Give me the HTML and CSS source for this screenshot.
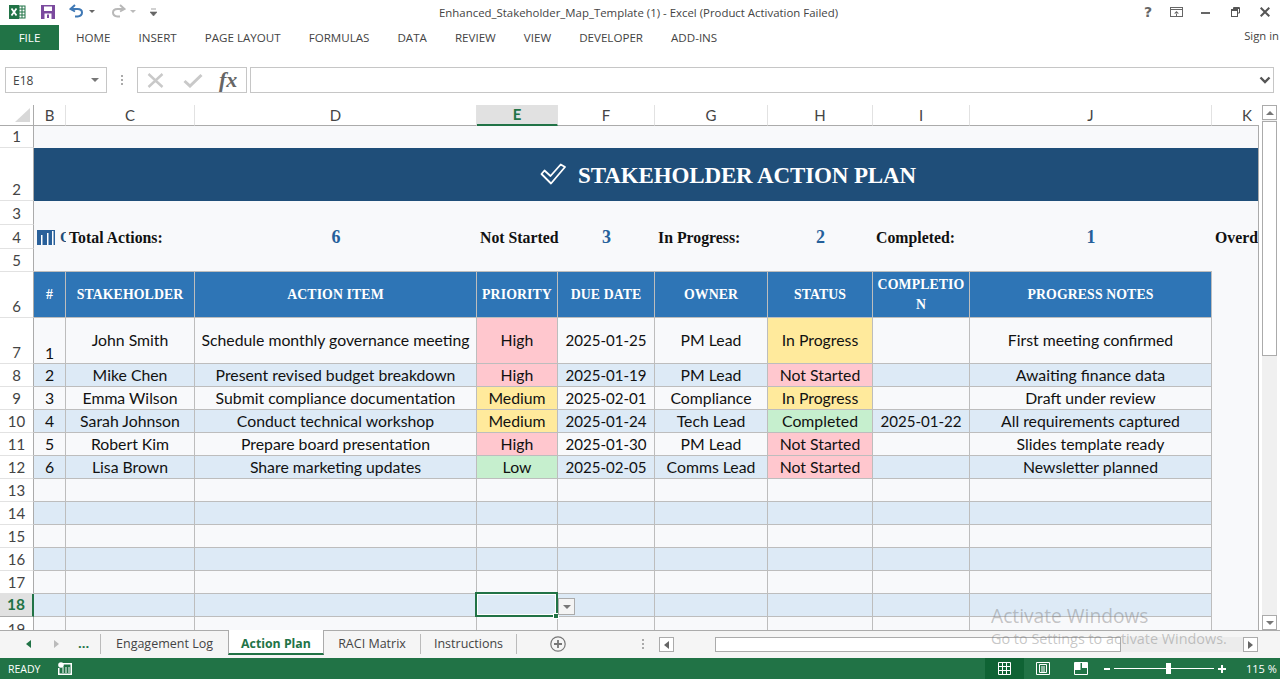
FILE: index.html
```html
<!DOCTYPE html>
<html lang="en">
<head>
<meta charset="utf-8">
<title>Excel</title>
<link rel="stylesheet" href="styles.css">
</head>
<body>
<div class="app">
  <header class="titlebar">
    <div class="qat">
      <svg class="ico-xl" viewBox="0 0 17 16" width="17" height="16"><rect x="6" y="2" width="10" height="12" fill="#fff" stroke="#217346"/><path d="M10 2v12M13 2v12M6 5h10M6 8h10M6 11h10" stroke="#217346" stroke-width="1"/><rect x="0" y="1" width="10" height="14" fill="#217346"/><path d="M2.500 4.500l5 7M7.500 4.500l-5 7" stroke="#fff" stroke-width="1.800"/></svg>
      <svg class="ico-save" viewBox="0 0 14 14" width="14" height="14"><path d="M0 0h14v14H0z" fill="#7b4a9e"/><rect x="3" y="1.500" width="8" height="4.500" fill="#fff"/><rect x="3.500" y="8.500" width="7" height="5.500" fill="#fff"/><rect x="6" y="9.500" width="2" height="3.500" fill="#7b4a9e"/></svg>
      <svg class="ico-undo" viewBox="0 0 16 14" width="16" height="14"><path d="M6 1L1.500 5 6 7.500" fill="none" stroke="#3f78b5" stroke-width="2"/><path d="M2 5h6.500c6 0 6 7 0 7.500H6" fill="none" stroke="#3f78b5" stroke-width="2"/></svg>
      <span class="caret"></span>
      <svg class="ico-redo" viewBox="0 0 16 14" width="16" height="14"><path d="M10 1l4.500 4L10 7.500" fill="none" stroke="#b8b8b8" stroke-width="2"/><path d="M14 5H7.500c-6 0-6 7 0 7.500H10" fill="none" stroke="#b8b8b8" stroke-width="2"/></svg>
      <span class="caret caret-off"></span>
      <svg class="ico-more" viewBox="0 0 7 8" width="7" height="8"><path d="M1 1h5M0 4h7l-3.500 4z" fill="#666" stroke="#666" stroke-width=".6"/></svg>
    </div>
    <div class="doc-title">Enhanced_Stakeholder_Map_Template (1) - Excel (Product Activation Failed)</div>
    <div class="winctl">
      <span class="help">?</span>
      <svg class="w-pin" viewBox="0 0 13 10" width="13" height="10"><rect x=".5" y=".5" width="12" height="9" fill="none" stroke="#666"/><path d="M1 2.500h11" stroke="#666"/><path d="M6.500 4l-2.500 2.500h5zM6 6h1v3H6z" fill="#666"/></svg>
      <svg class="w-min" viewBox="0 0 9 10" width="9" height="10"><path d="M0 6h9" stroke="#666" stroke-width="2"/></svg>
      <svg class="w-max" viewBox="0 0 9 10" width="9" height="10"><path d="M2.500 2.500V.5h6v5.500h-2" fill="none" stroke="#555"/><rect x=".5" y="2.500" width="6" height="7" fill="#fff" stroke="#555"/><path d="M.5 3.500h6M2.500 1.500h6" stroke="#555"/></svg>
      <svg class="w-x" viewBox="0 0 10 10" width="10" height="10"><path d="M.7 .7l8.600 8.600M9.300 .7L.7 9.300" stroke="#555" stroke-width="2"/></svg>
    </div>
  </header>

  <nav class="ribbon">
    <span class="file">FILE</span>
    <span class="rtab">HOME</span>
    <span class="rtab">INSERT</span>
    <span class="rtab">PAGE LAYOUT</span>
    <span class="rtab">FORMULAS</span>
    <span class="rtab">DATA</span>
    <span class="rtab">REVIEW</span>
    <span class="rtab">VIEW</span>
    <span class="rtab">DEVELOPER</span>
    <span class="rtab">ADD-INS</span>
    <span class="signin">Sign in</span>
  </nav>

  <div class="formula">
    <div class="namebox"><span>E18</span><i class="tri"></i></div>
    <div class="grip"></div>
    <div class="fxbox">
      <svg class="f-x" viewBox="0 0 17 15" width="17" height="15"><path d="M1.500 1l14 13M15.500 1l-14 13" stroke="#c9c9c9" stroke-width="2.400"/></svg>
      <svg class="f-c" viewBox="0 0 20 15" width="20" height="15"><path d="M1.500 8l5.500 5L18.500 2" fill="none" stroke="#c9c9c9" stroke-width="3"/></svg>
      <span class="fx">fx</span>
    </div>
    <div class="fbar"><svg viewBox="0 0 12 8" width="12" height="8"><path d="M1.500 1.500L6 6l4.500-4.500" fill="none" stroke="#555" stroke-width="2.400"/></svg></div>
  </div>

  <div class="work">
    <div class="sheetwrap">
      <table class="sheet">
        <colgroup>
          <col class="c-rh"><col class="c-b"><col class="c-c"><col class="c-d"><col class="c-e"><col class="c-f"><col class="c-g"><col class="c-h"><col class="c-i"><col class="c-j"><col class="c-k">
        </colgroup>
        <thead>
          <tr class="r-colhead">
            <th class="corner"><svg viewBox="0 0 15 14" width="15" height="14"><path d="M15 0v14H0z" fill="#d8d8d8"/></svg></th>
            <th>B</th><th>C</th><th>D</th><th class="sel-col">E</th><th>F</th><th>G</th><th>H</th><th>I</th><th>J</th><th class="last-h">K</th>
          </tr>
        </thead>
        <tbody>
          <tr class="r-1"><th>1</th><td class="blank" colspan="10"></td></tr>
          <tr class="r-2"><th>2</th><td class="banner" colspan="10"><div class="banner-in"><svg viewBox="0 0 26 22" width="26" height="22"><path d="M1.500 11l3-3.500 6 5.500L20.700 1.500 25 4 11 20.500z" fill="none" stroke="#fff" stroke-width="1.800" stroke-linejoin="round"/></svg><span>STAKEHOLDER ACTION PLAN</span></div></td></tr>
          <tr class="r-3"><th>3</th><td class="blank" colspan="10"></td></tr>
          <tr class="r-4"><th>4</th>
            <td class="kpi-ov"><div class="ov"><svg viewBox="0 0 18 15" width="18" height="15"><rect width="18" height="15" fill="#29609a"/><path d="M4 5h1.500v10H4zM10 3h1.500v12H10zM15 1h1.500v14H15z" fill="#fff"/></svg><span>Overview</span></div></td>
            <td class="kpi-l lead">Total Actions:</td><td class="kpi-v">6</td>
            <td class="kpi-l">Not Started</td><td class="kpi-v">3</td>
            <td class="kpi-l">In Progress:</td><td class="kpi-v">2</td>
            <td class="kpi-l">Completed:</td><td class="kpi-v">1</td>
            <td class="kpi-l clip">Overdue:</td>
          </tr>
          <tr class="r-5"><th>5</th><td class="rule" colspan="9"></td><td class="blank"></td></tr>
          <tr class="r-6"><th>6</th>
            <td class="h">#</td><td class="h">STAKEHOLDER</td><td class="h">ACTION ITEM</td><td class="h">PRIORITY</td><td class="h">DUE DATE</td><td class="h">OWNER</td><td class="h">STATUS</td><td class="h wrap">COMPLETION</td><td class="h">PROGRESS NOTES</td><td class="blank"></td>
          </tr>
          <tr class="r-7"><th>7</th>
            <td class="d num">1</td><td class="d">John Smith</td><td class="d">Schedule monthly governance meeting</td><td class="d red">High</td><td class="d dt">2025-01-25</td><td class="d">PM Lead</td><td class="d amber">In Progress</td><td class="d"></td><td class="d">First meeting confirmed</td><td class="blank"></td>
          </tr>
          <tr class="r-n alt"><th>8</th>
            <td class="d">2</td><td class="d">Mike Chen</td><td class="d">Present revised budget breakdown</td><td class="d red">High</td><td class="d dt">2025-01-19</td><td class="d">PM Lead</td><td class="d red">Not Started</td><td class="d"></td><td class="d">Awaiting finance data</td><td class="blank"></td>
          </tr>
          <tr class="r-n"><th>9</th>
            <td class="d">3</td><td class="d">Emma Wilson</td><td class="d">Submit compliance documentation</td><td class="d amber">Medium</td><td class="d dt">2025-02-01</td><td class="d">Compliance</td><td class="d amber">In Progress</td><td class="d"></td><td class="d">Draft under review</td><td class="blank"></td>
          </tr>
          <tr class="r-n alt"><th>10</th>
            <td class="d">4</td><td class="d">Sarah Johnson</td><td class="d">Conduct technical workshop</td><td class="d amber">Medium</td><td class="d dt">2025-01-24</td><td class="d">Tech Lead</td><td class="d green">Completed</td><td class="d dt">2025-01-22</td><td class="d">All requirements captured</td><td class="blank"></td>
          </tr>
          <tr class="r-n"><th>11</th>
            <td class="d">5</td><td class="d">Robert Kim</td><td class="d">Prepare board presentation</td><td class="d red">High</td><td class="d dt">2025-01-30</td><td class="d">PM Lead</td><td class="d red">Not Started</td><td class="d"></td><td class="d">Slides template ready</td><td class="blank"></td>
          </tr>
          <tr class="r-n alt"><th>12</th>
            <td class="d">6</td><td class="d">Lisa Brown</td><td class="d">Share marketing updates</td><td class="d green">Low</td><td class="d dt">2025-02-05</td><td class="d">Comms Lead</td><td class="d red">Not Started</td><td class="d"></td><td class="d">Newsletter planned</td><td class="blank"></td>
          </tr>
          <tr class="r-n"><th>13</th><td class="d"></td><td class="d"></td><td class="d"></td><td class="d"></td><td class="d"></td><td class="d"></td><td class="d"></td><td class="d"></td><td class="d"></td><td class="blank"></td></tr>
          <tr class="r-n alt"><th>14</th><td class="d"></td><td class="d"></td><td class="d"></td><td class="d"></td><td class="d"></td><td class="d"></td><td class="d"></td><td class="d"></td><td class="d"></td><td class="blank"></td></tr>
          <tr class="r-n"><th>15</th><td class="d"></td><td class="d"></td><td class="d"></td><td class="d"></td><td class="d"></td><td class="d"></td><td class="d"></td><td class="d"></td><td class="d"></td><td class="blank"></td></tr>
          <tr class="r-n alt"><th>16</th><td class="d"></td><td class="d"></td><td class="d"></td><td class="d"></td><td class="d"></td><td class="d"></td><td class="d"></td><td class="d"></td><td class="d"></td><td class="blank"></td></tr>
          <tr class="r-n"><th>17</th><td class="d"></td><td class="d"></td><td class="d"></td><td class="d"></td><td class="d"></td><td class="d"></td><td class="d"></td><td class="d"></td><td class="d"></td><td class="blank"></td></tr>
          <tr class="r-n alt"><th class="sel-row">18</th><td class="d"></td><td class="d"></td><td class="d"></td><td class="d active"><span class="selbox"></span><span class="handle"></span><span class="dd"><i class="tri"></i></span></td><td class="d"></td><td class="d"></td><td class="d"></td><td class="d"></td><td class="d"></td><td class="blank"></td></tr>
          <tr class="r-n"><th class="cutnum">19</th><td class="d"></td><td class="d"></td><td class="d"></td><td class="d"></td><td class="d"></td><td class="d"></td><td class="d"></td><td class="d"></td><td class="d"></td><td class="blank"></td></tr>
        </tbody>
      </table>
    </div>
    <div class="vscroll">
      <span class="sbtn"><i class="tri up"></i></span>
      <span class="vthumb"></span>
      <span class="vtrack"></span>
      <span class="sbtn"><i class="tri"></i></span>
    </div>
  </div>

  <div class="tabsbar">
    <div class="tabnav">
      <i class="arr left on"></i>
      <i class="arr right"></i>
      <span class="more">...</span>
    </div>
    <span class="stab t-eng">Engagement Log</span>
    <span class="stab active">Action Plan</span>
    <span class="stab t-raci">RACI Matrix</span>
    <span class="stab t-ins">Instructions</span>
    <svg class="plus" viewBox="0 0 16 16" width="16" height="16"><circle cx="8" cy="8" r="7.200" fill="none" stroke="#777" stroke-width="1.200"/><path d="M8 4v8M4 8h8" stroke="#777" stroke-width="1.800"/></svg>
    <div class="grip gtab"></div>
    <div class="hscroll">
      <span class="hbtn"><i class="arr left"></i></span>
      <span class="hgap"></span>
      <span class="hthumb"></span>
      <span class="htrack"></span>
      <span class="hbtn"><i class="arr right"></i></span>
    </div>
  </div>

  <footer class="status">
    <span class="ready">READY</span>
    <svg class="macro" viewBox="0 0 14 13" width="14" height="13"><circle cx="3" cy="3" r="2.800" fill="#fff"/><path d="M5 1h9v12H0V6h1.500v5.500h11v-9H5z" fill="#fff"/><path d="M4 6h8M4 8h8M4 10h8" stroke="#fff" stroke-dasharray="2 1"/></svg>
    <div class="views">
      <span class="view on"><svg viewBox="0 0 13 13" width="13" height="13"><path d="M.5 .5h12v12H.5zM4.500 .5v12M8.500 .5v12M.5 4.500h12M.5 8.500h12" fill="none" stroke="#fff"/></svg></span>
      <span class="view"><svg viewBox="0 0 14 13" width="14" height="13"><path d="M.5 .5h13v12H.5z" fill="none" stroke="#fff"/><path d="M3.500 2.500h7v8h-7zM5 5h4M5 7h4M5 9h4" fill="none" stroke="#fff"/></svg></span>
      <span class="view"><svg viewBox="0 0 14 13" width="14" height="13"><path d="M.5 .5h13v12H.5z" fill="none" stroke="#fff"/><path d="M1 1h5.500v7H1zM8 1h5v5H8z" fill="#fff"/></svg></span>
    </div>
    <div class="zoom">
      <span class="zminus"></span>
      <span class="slider"><span class="knob"></span></span>
      <span class="zplus"></span>
      <span class="pct">115 %</span>
    </div>
  </footer>

  <div class="activate">
    <div class="a1">Activate Windows</div>
    <div class="a2">Go to Settings to activate Windows.</div>
  </div>
</div>
</body>
</html>
```

FILE: styles.css
```css
* { box-sizing: border-box; }
html, body { margin: 0; padding: 0; height: 100%; background: #fff; overflow: hidden; }
.app { position: relative; width: 1280px; height: 679px; display: flex; flex-direction: column; font-family: "Open Sans", "Noto Sans", sans-serif; color: #444; overflow: hidden; }

/* title bar */
.titlebar { height: 25px; display: flex; align-items: center; position: relative; flex: none; padding-bottom: 2px; }
.qat { display: flex; align-items: center; padding-left: 9px; }
.ico-save { margin-left: 15px; }
.ico-undo { margin-left: 14px; margin-top: -1px; }
.caret { width: 0; height: 0; margin-left: 4px; border: 3px solid transparent; border-top: 3px solid #666; border-bottom: 0; }
.caret-off { border-top-color: #bbb; }
.ico-redo { margin-left: 15px; margin-top: -1px; }
.ico-more { margin-left: 14px; }
.doc-title { position: absolute; left: 439px; top: 5px; font-size: 11.420px; line-height: 16px; color: #444; white-space: nowrap; }
.winctl { margin-left: auto; display: flex; align-items: center; padding-right: 10px; }
.help { font: bold 14px/16px "DejaVu Sans", sans-serif; color: #666; width: 8px; margin-right: 18px; }
.w-pin { margin-right: 18px; }
.w-min { margin-right: 21px; }
.w-max { margin-right: 20px; }

/* ribbon */
.ribbon { height: 25px; display: flex; align-items: center; flex: none; font-size: 11.600px; color: #444; }
.file { width: 59px; height: 25px; background: #217346; color: #fff; display: flex; align-items: center; justify-content: center; margin-right: 17px; }
.rtab { margin-right: 28px; white-space: nowrap; }
.signin { margin-left: auto; margin-right: 1px; margin-top: -4px; font-size: 11.300px; }

/* formula bar */
.formula { height: 26px; margin-top: 17px; display: flex; flex: none; padding: 0 6px 0 5px; }
.namebox { width: 102px; border: 1px solid #c6c6c6; display: flex; align-items: center; justify-content: space-between; padding: 0 7px; font-size: 12px; color: #444; }
.tri { display: block; width: 0; height: 0; border-left: 4px solid transparent; border-right: 4px solid transparent; border-top: 4px solid #777; }
.tri.up { border-top: 0; border-bottom: 4px solid #777; }
.grip { width: 2px; height: 10px; margin: 8px 14px 0 14px; background: repeating-linear-gradient(#aaa 0 2px, transparent 2px 4px); }
.fxbox { width: 110px; border: 1px solid #c6c6c6; display: flex; align-items: center; padding-left: 9px; margin-right: 3px; }
.f-x { margin-right: 19px; }
.f-c { margin-right: 16px; }
.fx { font: italic bold 22px/20px "Liberation Serif", serif; color: #666; }
.fbar { flex: 1; border: 1px solid #c6c6c6; display: flex; align-items: center; justify-content: flex-end; padding-right: 2px; }

/* sheet */
.work { margin-top: 12px; height: 525px; display: flex; flex: none; }
.sheetwrap { width: 1259px; height: 525px; overflow: hidden; flex: none; }
.sheet { table-layout: fixed; width: 1259px; border-collapse: separate; border-spacing: 0; font-family: Lato, "Noto Sans", sans-serif; font-size: 15.800px; color: #111; }
.c-rh { width: 34px; } .c-b { width: 32px; } .c-c { width: 129px; } .c-d { width: 282px; } .c-e { width: 81px; } .c-f { width: 97px; } .c-g { width: 113px; } .c-h { width: 105px; } .c-i { width: 97px; } .c-j { width: 242px; } .c-k { width: 47px; }

.r-colhead { height: 21px; }
.r-1 { height: 22px; } .r-2 { height: 53px; } .r-3 { height: 24px; } .r-4 { height: 24px; } .r-5 { height: 23px; }
.r-6 { height: 46px; } .r-7 { height: 46px; } .r-n { height: 23px; }

.sheet th { padding: 0 0 2px; font-weight: 400; font-size: 15px; color: #444; background: #fff; vertical-align: bottom; text-align: center; border-right: 1px solid #ababab; border-bottom: 1px solid #e2e2e2; line-height: 17px; }
.sheet thead th { padding: 0; vertical-align: middle; border-right: 1px solid #e2e2e2; border-bottom: 1px solid #ababab; }
.sheet thead th.corner { text-align: left; border-right: 1px solid #ababab; vertical-align: top; padding: 3px 0 0 15px; line-height: 0; }
.sheet thead th.last-h { border-right: 0; padding-left: 30px; text-align: left; }
.sheet thead th.sel-col { background: #e1e1e1; color: #217346; font-weight: 700; border-bottom: 2px solid #217346; }
.sheet th.sel-row { background: #e1e1e1; color: #217346; font-weight: 700; font-size: 15.500px; vertical-align: middle; border-right: 2px solid #217346; border-bottom: 1px solid #ababab; }
.sheet th.cutnum { vertical-align: top; padding: 4px 0 0; border-bottom: 0; overflow: hidden; }

.sheet td { padding: 0; background: #f8f9fb; text-align: center; vertical-align: middle; white-space: nowrap; line-height: 17px; }
.blank, .clip { border-right: 1px solid #ababab; }
.sheet td.rule { border-bottom: 1px solid #bdbdbd; }
.sheet td.banner { background: #1f4e79; border-right: 1px solid #ababab; padding-top: 2px; }
.banner-in { display: flex; align-items: center; justify-content: center; padding-left: 164px; gap: 12px; color: #fff; }
.banner-in svg { margin-top: -3px; flex: none; }
.banner-in span { font: 700 23px/30px "Liberation Serif", serif; letter-spacing: -.12px; }

.sheet td.kpi-l { font: 700 15.800px/17px "Liberation Serif", serif; text-align: left; padding-left: 3px; color: #111; }
.sheet td.kpi-v { font: 700 18px/20px "Liberation Serif", serif; color: #25609a; }
.sheet td.kpi-ov { overflow: hidden; }
.ov { display: flex; align-items: center; gap: 5px; padding-left: 3px; font: 700 15px/17px "Liberation Serif", serif; color: #1f4e79; }
.ov svg { flex: none; }
.sheet td.clip { overflow: hidden; }

.sheet td.h { padding-top: 1px; background: #2e75b6; color: #fff; font: 700 13.800px/18px "Liberation Serif", serif; letter-spacing: .1px; border-right: 1px solid #bdbdbd; border-bottom: 1px solid #bdbdbd; }
.sheet td.wrap { padding: 0 4px; line-height: 20px; white-space: normal; word-break: break-all; }

.sheet td.d { padding-bottom: 2px; border-right: 1px solid #bdbdbd; border-bottom: 1px solid #bdbdbd; }
.sheet td.dt { padding-bottom: 0; font-size: 15.100px; }
.sheet td.num { vertical-align: bottom; padding-bottom: 2px; }
.alt td.d { background: #ddeaf6; }
.sheet td.red { background: #ffc7ce; }
.sheet td.amber { background: #ffea9c; }
.sheet td.green { background: #c6efce; }

.active { position: relative; }
.selbox { position: absolute; left: -2px; top: -2px; right: -1px; bottom: -1px; border: 2px solid #217346; box-shadow: inset 0 0 0 1px #fff; }
.handle { position: absolute; right: -2px; bottom: -3px; box-sizing: content-box; width: 4px; height: 4px; background: #217346; border: 1px solid #fff; }
.dd { position: absolute; left: 81px; top: 4px; width: 17px; height: 17px; background: #f4f4f4; border: 1px solid #ababab; display: flex; align-items: center; justify-content: center; }

/* vertical scrollbar */
.vscroll { width: 15px; margin-left: 3px; display: flex; flex-direction: column; background: #f0f0f0; }
.sbtn { height: 15px; flex: none; background: #fff; border: 1px solid #ababab; display: flex; align-items: center; justify-content: center; }
.vthumb { height: 235px; margin-top: 1px; flex: none; background: #fff; border: 1px solid #ababab; }
.vtrack { flex: 1; }

/* tabs */
.tabsbar { height: 28px; flex: none; display: flex; align-items: flex-start; background: #f5f5f5; border-top: 1px solid #ababab; position: relative; font-size: 12.500px; color: #444; }
.tabnav { width: 101px; height: 20px; padding: 0 0 0 26px; display: flex; align-items: center; border-right: 1px solid #bbb; margin-top: 3px; flex: none; }
.arr { display: block; width: 0; height: 0; border-top: 4px solid transparent; border-bottom: 4px solid transparent; }
.arr.left { border-right: 5px solid #666; }
.arr.right { border-left: 5px solid #bbb; }
.arr.left.on { border-right-color: #217346; }
.tabnav .arr.right { margin-left: 23px; }
.more { margin-left: 19px; font-weight: 700; color: #217346; line-height: 16px; font-size: 13px; margin-top: -3px; }
.stab { height: 20px; margin-top: 3px; padding-bottom: 2px; display: flex; align-items: center; justify-content: center; flex: none; border-right: 1px solid #bbb; white-space: nowrap; }
.t-eng { width: 127px; border-right: 0; }
.t-raci { width: 97px; }
.t-ins { width: 96px; }
.stab.active { width: 96px; height: 25px; margin-top: -1px; padding: 4px 0 0; background: #fff; color: #217346; font-weight: 700; font-size: 12.300px; border-left: 1px solid #ababab; border-right: 1px solid #ababab; border-bottom: 2px solid #217346; }
.plus { margin: 5px 0 0 33px; flex: none; }
.gtab { margin: 8px 14px 0 76px; flex: none; }
.hscroll { position: absolute; left: 659px; top: 6px; width: 599px; height: 15px; display: flex; background: #ececec; }
.hbtn { width: 15px; height: 15px; flex: none; background: #fff; border: 1px solid #ababab; display: flex; align-items: center; justify-content: center; }
.hbtn .arr.right { border-left-color: #666; }
.hgap { width: 41px; flex: none; background: #f5f5f5; }
.hthumb { width: 406px; flex: none; background: #fff; border: 1px solid #ababab; }
.htrack { flex: 1; }

/* status */
.status { height: 21px; flex: none; background: #217346; color: #fff; display: flex; align-items: center; font-size: 10.500px; position: relative; }
.ready { margin-left: 8px; }
.macro { margin-left: 18px; }
.views { position: absolute; left: 985px; top: 0; display: flex; }
.view { width: 38.500px; height: 21px; display: flex; align-items: center; justify-content: center; }
.view.on { background: #0f6334; }
.zoom { position: absolute; left: 1104px; top: 0; height: 21px; display: flex; align-items: center; }
.zminus { width: 6px; height: 2px; background: #fff; }
.slider { width: 100px; height: 1px; background: #fff; margin-left: 4px; position: relative; }
.knob { position: absolute; left: 52px; top: -5px; width: 5px; height: 11px; background: #fff; }
.zplus { width: 8px; height: 8px; margin-left: 4px; background: linear-gradient(#fff,#fff) center/8px 2px no-repeat, linear-gradient(#fff,#fff) center/2px 8px no-repeat; }
.pct { margin-left: 20px; font-size: 11px; }

/* watermark */
.activate { position: absolute; left: 991px; top: 604px; color: rgba(120,120,120,.42); pointer-events: none; white-space: nowrap; }
.a1 { font-size: 19.200px; line-height: 24px; }
.a2 { font-size: 14.400px; line-height: 22px; }
```
